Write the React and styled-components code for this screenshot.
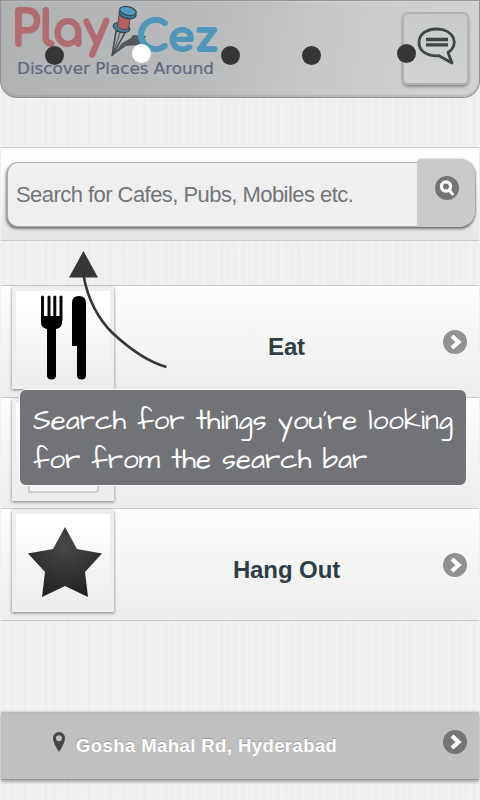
import React from "react";
import styled, { createGlobalStyle } from "styled-components";

const GlobalStyle = createGlobalStyle`
  * { box-sizing: border-box; }
  body { margin: 0; background: #fff; font-family: "Liberation Sans", Arial, sans-serif; }
`;

const Screen = styled.div`
  position: relative;
  width: 480px;
  height: 800px;
  padding: 0 1px;
  overflow: hidden;
  display: flex;
  flex-direction: column;
  background-color: #efefef;
  background-image:
    repeating-linear-gradient(90deg, rgba(255, 255, 255, 0.16) 0 2px, transparent 3px 7px),
    repeating-linear-gradient(90deg, rgba(0, 0, 0, 0.008) 0 3px, transparent 4px 11px);
`;

const Header = styled.header`
  flex: none;
  height: 98px;
  margin: 0 -1px;
  padding: 0 10px 0 10px;
  display: flex;
  justify-content: space-between;
  border: 1px solid #929395;
  border-top: 1px solid #999799;
  border-radius: 0 0 17px 17px;
  background: linear-gradient(100deg, #b0b1b2 0%, #b9babb 42%, #cbcccc 75%, #d2d3d3 100%);
  box-shadow: inset 0 -2px 1px rgba(120, 120, 120, 0.22), inset 0 1px 0 rgba(255, 255, 255, 0.12);
`;

const Logo = styled.svg`
  display: block;
  width: 214px;
  height: 84px;
  overflow: visible;
  font-family: Comfortaa, "Varela Round", Quicksand, Nunito, Lato, sans-serif;
`;

const ChatButton = styled.button`
  width: 67px;
  height: 73px;
  margin-top: 11px;
  padding: 0 0 0 3px;
  display: grid;
  place-items: center;
  border: 2px solid #b0b1b1;
  border-radius: 6px;
  background: linear-gradient(#c9caca, #d1d2d2);
  box-shadow: 0 2px 3px rgba(0, 0, 0, 0.32);

  svg { display: block; margin-bottom: 6px; }
`;

const SearchPanel = styled.section`
  flex: none;
  height: 94px;
  margin-top: 49px;
  padding: 14px 4px 0 6px;
  border-top: 1px solid #cbcbcb;
  border-bottom: 1px solid #c9c9c9;
  background: linear-gradient(#ffffff 0%, #fdfdfd 20%, #e5e5e5 100%);
`;

const SearchBox = styled.div`
  height: 65px;
  display: flex;
  align-items: stretch;
  border: 1px solid #aaa;
  border-right: 0;
  border-radius: 11px 17px 14px 11px;
  background: #efefef;
  box-shadow: -1px 2px 3px rgba(0, 0, 0, 0.5);
`;

const Placeholder = styled.span`
  flex: 1;
  padding-left: 8px;
  line-height: 63px;
  font-size: 22px;
  letter-spacing: -0.55px;
  color: #737579;
  white-space: nowrap;
`;

const SearchButton = styled.button`
  width: 58px;
  height: 68px;
  margin: -4px 0 0;
  padding: 0 0 10px 1px;
  display: grid;
  place-items: center;
  border: 0;
  border-radius: 4px 16px 16px 0;
  background: #cacaca;
  box-shadow: 1px 0 2px rgba(0, 0, 0, 0.34);
`;

const Categories = styled.main`
  flex: none;
  height: 336px;
  margin-top: 44px;
  border-bottom: 1px solid #c9c9c9;
`;

const CategoryRow = styled.div`
  height: ${(p) => p.$height}px;
  padding: 0 12px 0 11px;
  display: flex;
  align-items: flex-start;
  border-top: 1px solid #cccccc;
  background: linear-gradient(#fdfdfd, #ececec);
`;

const Tile = styled.div`
  flex: none;
  width: 102px;
  height: 102px;
  margin-top: 1px;
  border: 4px solid #eeeeee;
  background: linear-gradient(#ffffff 15%, #ebebeb);
  box-shadow: 0 1px 3px rgba(0, 0, 0, 0.48);

  svg { display: block; }
`;

const RowLabel = styled.span`
  flex: 1;
  padding: 47px 0 0 16px;
  text-align: center;
  font-size: 24px;
  letter-spacing: -0.1px;
  line-height: 27px;
  font-weight: bold;
  color: #2f3e46;
`;

const RoundArrow = styled.span`
  flex: none;
  width: 24px;
  height: 24px;
  margin-top: ${(p) => p.$top}px;
  border-radius: 50%;
  background: ${(p) => p.$color};

  svg { display: block; }
`;

const LocationBar = styled.footer`
  flex: none;
  height: 68px;
  margin-top: 91px;
  padding: 0 12px 0 51px;
  display: flex;
  align-items: flex-start;
  background: #c0c0c0;
  border-top: 2px solid #bababa;
  border-bottom: 1px solid #949494;
  box-shadow: 0 2px 3px rgba(0, 0, 0, 0.3), 0 -1px 2px rgba(0, 0, 0, 0.1);
`;

const Pin = styled.svg`
  flex: none;
  width: 14px;
  height: 22px;
  margin-top: 17px;
`;

const Address = styled.span`
  flex: 1;
  padding: 20px 0 0 10px;
  font-size: 18.5px;
  line-height: 24px;
  font-weight: bold;
  letter-spacing: 0.42px;
  color: #ffffff;
  text-shadow: 0 -1px 1px #99999b;
`;

const Dot = styled.i`
  position: absolute;
  left: ${(p) => p.$x}px;
  top: ${(p) => p.$y}px;
  width: 19px;
  height: 19px;
  border-radius: 50%;
  background: ${(p) => (p.$active ? "#ffffff" : "#373536")};
`;

const GuideArrow = styled.svg`
  position: absolute;
  left: 60px;
  top: 245px;
`;

const Tip = styled.aside`
  position: absolute;
  left: 19px;
  top: 389px;
  width: 448px;
  height: 97px;
  padding: 12px 0 0 13px;
  border: 1px solid #fafafa;
  border-radius: 7px;
  background: #727377;
  color: #ffffff;
  font-family: "Architects Daughter", Lato, sans-serif;
  font-size: 27.67px;
`;

const TipLine = styled.div`
  height: 39px;
  line-height: 39px;
  white-space: nowrap;
`;

const dots = [
  { x: 45, y: 46 },
  { x: 132, y: 44, active: true },
  { x: 221, y: 46 },
  { x: 302, y: 46 },
  { x: 397, y: 44 },
];

const tipLines = ["Search for things you’re looking", "for from the search bar"];

const Chevron = ({ top, color }) => (
  <RoundArrow $top={top} $color={color}>
    <svg width="24" height="24" viewBox="0 0 24 24">
      <path d="M9 6 15.500 12 9 18" fill="none" stroke="#fff" strokeWidth="4.300" />
    </svg>
  </RoundArrow>
);

const Cutlery = () => (
  <svg width="94" height="94" viewBox="0 0 94 94">
    <path d="M26.500 6v23M33 6v23M38.800 6v23M45 6v23" stroke="#080808" strokeWidth="3" strokeLinecap="round" />
    <path d="M25 25h21v6q0 6-6 7v46q0 4.500-4.500 4.500T31 84V38q-6-1-6-7z" />
    <path d="M56 12q0-7 7-7t7 7v72q0 4.500-4.500 4.500T61 84V55h-5z" />
  </svg>
);

const Bag = () => (
  <svg width="94" height="94" viewBox="0 0 94 94">
    <path d="M13 30h71l-2 57q0 2-2 2H13z" fill="#f7f7f7" stroke="#aaa" />
  </svg>
);

const Star = () => (
  <svg width="94" height="94" viewBox="0 0 94 94">
    <defs>
      <radialGradient id="star" cx=".5" cy=".28" r=".75">
        <stop offset="0" stopColor="#484848" />
        <stop offset="1" stopColor="#202020" />
      </radialGradient>
    </defs>
    <path d="M49 13 61 35l25 4.500-17 18.500 3 25-23-11-23 11 3-25-17-18.500 25-4.500z" fill="url(#star)" />
  </svg>
);

const BrandLogo = () => (
  <Logo viewBox="11 1 214 84">
    <path d="m112 56 10-13 9-5 2-3 13 1-4 7-4 2-12 1z" fill="#55585b" />
    <g strokeLinejoin="round" fontWeight="700">
      <g fill="#b06c70" stroke="#b06c70" strokeWidth="1.800">
        <text x="11.500" y="46" fontSize="48" textLength="97" lengthAdjust="spacingAndGlyphs">Play</text>
      </g>
      <g fill="#5096b8" stroke="#5096b8" strokeWidth="1.800">
        <text x="136" y="50.500" fontSize="42" textLength="82" lengthAdjust="spacingAndGlyphs">Cez</text>
      </g>
    </g>
    <path d="m116 31-4 25 13-23z" fill="#a9aaab" stroke="#424548" strokeWidth="1.500" />
    <path d="m120 33-8 23" stroke="#55585b" />
    <ellipse cx="121.500" cy="27.500" rx="8.500" ry="4.500" transform="rotate(16 121.500 27.500)" fill="#477d9e" stroke="#344650" strokeWidth="1.200" />
    <path d="m119 15-1.500 12q5 4 11 2l2-13z" fill="#b46062" stroke="#59484a" />
    <ellipse cx="127.500" cy="14" rx="8.700" ry="4.500" transform="rotate(13 127.500 14)" fill="#41799b" stroke="#344650" strokeWidth="1.200" />
    <ellipse cx="128" cy="11" rx="8.500" ry="4.200" transform="rotate(13 128 11)" fill="#5599bd" stroke="#344650" strokeWidth="1.200" />
    <text x="17" y="74" fontFamily="DejaVu Sans, sans-serif" fontSize="15.700" fill="#5e687e" stroke="#5e687e" strokeWidth=".2" textLength="197" lengthAdjust="spacingAndGlyphs">Discover Places Around</text>
  </Logo>
);

export default function App() {
  return (
    <>
      <GlobalStyle />
      <Screen>
        <Header>
          <BrandLogo />
          <ChatButton aria-label="Messages">
            <svg width="40" height="38" viewBox="0 0 40 38">
              <path d="M31 25.500C43 18 37 2 20 2 8 2 2 8 2 15.500c0 8 7 14 20 13.200L35 36z" fill="none" stroke="#414545" strokeWidth="2.800" strokeLinejoin="round" />
              <path d="M9 12.500h22M9 17.800h22" stroke="#414545" strokeWidth="3.300" />
            </svg>
          </ChatButton>
        </Header>

        <SearchPanel>
          <SearchBox>
            <Placeholder>Search for Cafes, Pubs, Mobiles etc.</Placeholder>
            <SearchButton aria-label="Search">
              <svg width="24" height="24" viewBox="0 0 24 24">
                <circle cx="12" cy="12" r="12" fill="#747474" />
                <circle cx="11" cy="10.500" r="4.600" fill="none" stroke="#fff" strokeWidth="3.200" />
                <path d="m14 14 3.500 4" stroke="#fff" strokeWidth="3" strokeLinecap="round" />
              </svg>
            </SearchButton>
          </SearchBox>
        </SearchPanel>

        <Categories>
          <CategoryRow $height={112}>
            <Tile><Cutlery /></Tile>
            <RowLabel>Eat</RowLabel>
            <Chevron top={44} color="#919191" />
          </CategoryRow>
          <CategoryRow $height={111}>
            <Tile><Bag /></Tile>
          </CategoryRow>
          <CategoryRow $height={112}>
            <Tile><Star /></Tile>
            <RowLabel>Hang Out</RowLabel>
            <Chevron top={44} color="#919191" />
          </CategoryRow>
        </Categories>

        <LocationBar>
          <Pin viewBox="0 0 14 22">
            <path fillRule="evenodd" d="M7 1a6 6 0 0 0-6 6q0 5 6 14 6-9 6-14a6 6 0 0 0-6-6zm0 3.200a3 3 0 1 1 0 6 3 3 0 0 1 0-6z" fill="#464646" />
          </Pin>
          <Address>Gosha Mahal Rd, Hyderabad</Address>
          <Chevron top={16} color="#747474" />
        </LocationBar>

        {dots.map((d) => (
          <Dot key={d.x} $x={d.x} $y={d.y} $active={d.active} />
        ))}

        <GuideArrow width="110" height="126" viewBox="60 245 110 126">
          <path d="M83.500 275c4 25 16 45 28 57 17 16 37 30 55 35" fill="none" stroke="#373536" strokeWidth="2.600" />
          <path d="m83.500 251-14.500 26.500h29z" fill="#373536" />
        </GuideArrow>

        <Tip>
          {tipLines.map((line) => (
            <TipLine key={line}>{line}</TipLine>
          ))}
        </Tip>
      </Screen>
    </>
  );
}
